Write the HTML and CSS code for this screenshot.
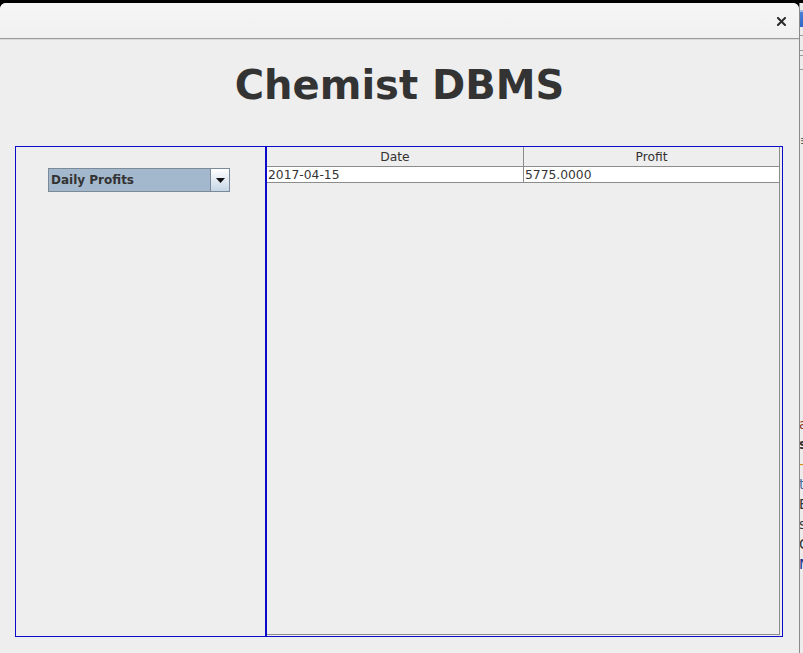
FILE: index.html
```html
<!DOCTYPE html>
<html>
<head>
<meta charset="utf-8">
<title>Chemist DBMS</title>
<link rel="stylesheet" href="styles.css">
</head>
<body>
<div class="screen">
  <div class="window">
    <div class="titlebar">
      <span class="close">
        <svg width="9" height="9" viewBox="0 0 9 9"><path d="M1 1 L8 8 M8 1 L1 8" stroke="#2b2b2b" stroke-width="2" stroke-linecap="square"/></svg>
      </span>
    </div>
    <div class="content">
      <h1 class="title">Chemist DBMS</h1>
      <div class="panels">
        <div class="left-panel">
          <div class="combo">
            <span class="combo-text">Daily Profits</span>
            <span class="combo-btn">
              <svg width="9" height="5" viewBox="0 0 9 5"><path d="M0 0 H9 L4.5 5 Z" fill="#111"/></svg>
            </span>
          </div>
        </div>
        <div class="right-panel">
          <div class="scroll">
            <div class="thead">
              <div class="th th-first">Date</div>
              <div class="th">Profit</div>
            </div>
            <div class="row">
              <div class="td td-first">2017-04-15</div>
              <div class="td">5775.0000</div>
            </div>
          </div>
        </div>
      </div>
    </div>
  </div>
  <div class="side">
    <div class="side-blue"></div>
    <div class="side-line l1"></div>
    <div class="side-line l2"></div>
    <div class="side-line l3"></div>
    <div class="side-line l4"></div>
    <div class="side-menu">≡</div>
    <div class="side-text">
      <div class="c-red">a</div>
      <div class="c-dark b">s</div>
      <div class="c-orange">-</div>
      <div class="c-blue">t</div>
      <div class="c-dark">E</div>
      <div class="c-dark">s</div>
      <div class="c-dark">C</div>
      <div class="c-navy">M</div>
    </div>
  </div>
</div>
</body>
</html>
```
FILE: styles.css
```css
html, body {
  margin: 0;
  padding: 0;
  background: #000;
}
.screen {
  width: 803px;
  height: 653px;
  background: #000;
  display: flex;
  overflow: hidden;
  font-family: "DejaVu Sans", sans-serif;
}
.window {
  width: 799px;
  margin-top: 3px;
  background: #eeeeee;
  border-radius: 6px 6px 0 0;
  display: flex;
  flex-direction: column;
}
.titlebar {
  height: 35px;
  background: linear-gradient(#f6f6f6, #f0f0f0);
  border-radius: 6px 6px 0 0;
  border-bottom: 1px solid #9a9a9a;
  box-shadow: 0 1px 0 #dadada;
  display: flex;
  align-items: center;
  justify-content: flex-end;
  padding-right: 13px;
}
.close {
  display: flex;
  width: 9px;
  height: 9px;
  margin-top: 1px;
}
.content {
  flex: 1;
  display: flex;
  flex-direction: column;
}
.title {
  margin: 23px 0 0 0;
  font-size: 40px;
  line-height: 47px;
  font-weight: bold;
  color: #333333;
  text-align: center;
}
.panels {
  display: flex;
  margin: 37px 0 0 15px;
  height: 491px;
  width: 768px;
}
.left-panel {
  border: 1px solid #0a0ac8;
  padding: 21px 0 0 32px;
  box-sizing: border-box;
  width: 251px;
}
.combo {
  width: 182px;
  height: 24px;
  box-sizing: border-box;
  border: 1px solid #7a8a99;
  background: #a3b8cc;
  display: flex;
}
.combo-text {
  flex: 1;
  font-size: 12px;
  font-weight: bold;
  line-height: 22px;
  color: #333333;
  padding-left: 2px;
}
.combo-btn {
  width: 18px;
  border-left: 1px solid #7a8a99;
  background: linear-gradient(#ffffff, #c6d6e6);
  display: flex;
  align-items: center;
  justify-content: center;
}
.combo-btn svg {
  margin-top: 1px;
}
.right-panel {
  flex: 1;
  border: 1px solid #0a0ac8;
  display: flex;
}
.scroll {
  flex: 1;
  margin: 0 2px 1px 0;
  border-right: 1px solid #8c8c8c;
  border-bottom: 1px solid #8c8c8c;
  display: flex;
  flex-direction: column;
}
.thead, .row {
  display: grid;
  grid-template-columns: 257px 1fr;
}
.thead {
  height: 20px;
  box-sizing: border-box;
  border-bottom: 1px solid #8c8c8c;
  background: #eeeeee;
}
.th {
  font-size: 12.3px;
  line-height: 17px;
  padding-top: 2px;
  text-align: center;
  color: #333333;
}
.th-first, .td-first {
  border-right: 1px solid #8c8c8c;
}
.row {
  height: 16px;
  box-sizing: border-box;
  border-bottom: 1px solid #8c8c8c;
  background: #ffffff;
}
.td {
  font-size: 12.3px;
  line-height: 14px;
  padding-top: 1px;
  color: #333333;
  padding-left: 1px;
}
.side {
  width: 4px;
  margin-top: 3px;
  background: #ececec;
  box-sizing: border-box;
  border-left: 1px solid #8a8a8a;
  display: flex;
  flex-direction: column;
  overflow: hidden;
}
.side-blue {
  height: 15px;
  margin-top: 7px;
  background: linear-gradient(#4a7fd6, #2f66c4);
  border-top: 2px solid #9fbde8;
}
.side-line {
  height: 1px;
  background: #9a9a9a;
}
.l1 { margin-top: 8px; }
.l2 { margin-top: 14px; }
.l3 { margin-top: 4px; }
.l4 { margin-top: 13px; }
.side-menu {
  margin-top: 64px;
  font-size: 13px;
  line-height: 14px;
  color: #555;
}
.side-text {
  margin-top: 266px;
  font-size: 14px;
  line-height: 20px;
  text-indent: -1px;
}
.c-red { color: #8b2a10; }
.c-dark { color: #333; }
.c-orange { color: #e08a10; }
.c-blue { color: #4a6a9a; }
.c-navy { color: #12308a; }
.b { font-weight: bold; }
```
